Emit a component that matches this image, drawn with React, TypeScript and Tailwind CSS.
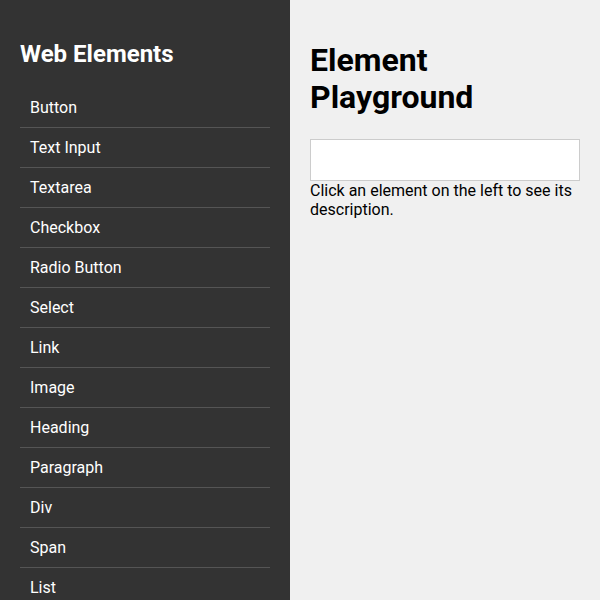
const elements = [
  "Button",
  "Text Input",
  "Textarea",
  "Checkbox",
  "Radio Button",
  "Select",
  "Link",
  "Image",
  "Heading",
  "Paragraph",
  "Div",
  "Span",
  "List",
];

export default function App() {
  return (
    <div className="flex min-h-screen font-['Roboto',sans-serif] leading-[1.172]">
      <aside className="w-[290px] shrink-0 bg-[#333333] p-5 text-white">
        <h2 className="my-[20px] text-2xl/[28px] font-bold">Web Elements</h2>
        <ul>
          {elements.map((name) => (
            <li key={name} className="cursor-pointer border-b border-[#555555] p-[10px] text-base/[19px]">
              {name}
            </li>
          ))}
        </ul>
      </aside>
      <main className="flex-1 bg-[#f0f0f0] p-5 text-black">
        <h1 className="mt-[21.5px] mb-[22px] text-[32px]/[37.5px] font-bold">Element Playground</h1>
        <input
          type="text"
          className="block h-[42px] w-full border border-[#cccccc] bg-white p-[10px] text-base/[19px] outline-none"
        />
        <p className="text-base/[19px]">Click an element on the left to see its description.</p>
      </main>
    </div>
  );
}
